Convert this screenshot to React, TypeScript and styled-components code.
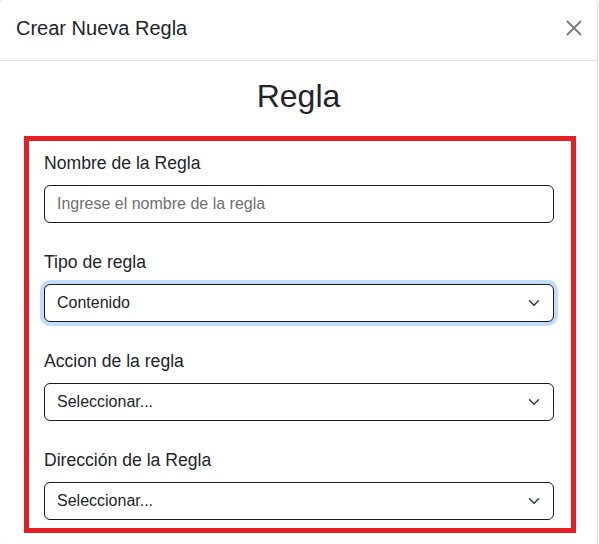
import React from 'react';
import styled, { createGlobalStyle } from 'styled-components';

const GlobalStyle = createGlobalStyle`
  body {
    margin: 0;
    background: #fff;
    font-family: "Liberation Sans", Arial, sans-serif;
    color: #212529;
  }
`;

const Modal = styled.div`
  width: 599px;
  margin: -4px 0 0 -1px;
  box-sizing: border-box;
  background: #fff;
  border: 1px solid #dee2e6;
  border-radius: 8px;
  overflow: hidden;
`;

const Header = styled.div`
  display: flex;
  align-items: center;
  justify-content: space-between;
  padding: 16px 15px 17px 16px;
  border-bottom: 1px solid #dee2e6;
`;

const Title = styled.h5`
  margin: 0;
  font-size: 20px;
  line-height: 30px;
  font-weight: 400;
  color: #212529;
`;

const CloseButton = styled.button`
  display: flex;
  padding: 0;
  border: 0;
  background: transparent;
  cursor: pointer;
  width: 16px;
  height: 16px;
`;

const Body = styled.div`
  padding: 16px 16px 16px;
`;

const Heading = styled.h2`
  margin: 0 0 21px;
  text-align: center;
  font-size: 32px;
  line-height: 38px;
  font-weight: 400;
  color: #212529;
`;

const RuleBox = styled.div`
  margin: 0 5px 0 8px;
  border: 5px solid #e31e24;
  padding: 12px 17px 8px 15px;
`;

const Field = styled.div`
  margin-bottom: 29px;

  &:last-child {
    margin-bottom: 0;
  }
`;

const Label = styled.label`
  display: block;
  font-size: 17.6px;
  line-height: 20px;
  margin-bottom: 12px;
  color: #212529;
`;

const controlStyles = `
  display: block;
  width: 100%;
  height: 38px;
  box-sizing: border-box;
  padding: 6px 12px;
  font-family: "Liberation Sans", Arial, sans-serif;
  font-size: 16px;
  line-height: 24px;
  color: #212529;
  background: #fff;
  border: 1px solid #1c1c1c;
  border-radius: 6px;
  outline: none;
`;

const TextInput = styled.input`
  ${controlStyles}

  &::placeholder {
    color: #6f6f6f;
  }
`;

const SelectWrap = styled.div`
  position: relative;
`;

const Select = styled.select<{ $focused?: boolean }>`
  ${controlStyles}
  appearance: none;
  padding-right: 36px;
  box-shadow: ${({ $focused }) =>
    $focused ? '0 0 0 4px rgba(13, 110, 253, 0.25)' : 'none'};
`;

const Chevron = styled.svg`
  position: absolute;
  right: 14px;
  top: 50%;
  margin-top: -6px;
  pointer-events: none;
`;

function SelectField({
  label,
  value,
  options,
  focused
}: {
  label: string;
  value: string;
  options: string[];
  focused?: boolean;
}) {
  return (
    <Field>
      <Label>{label}</Label>
      <SelectWrap>
        <Select defaultValue={value} $focused={focused}>
          {options.map(o => (
            <option key={o}>{o}</option>
          ))}
        </Select>
        <Chevron width="12" height="12" viewBox="0 0 16 16">
          <path
            d="M2 5l6 6 6-6"
            fill="none"
            stroke="#343a40"
            strokeWidth="2"
            strokeLinecap="round"
            strokeLinejoin="round"
          />
        </Chevron>
      </SelectWrap>
    </Field>
  );
}

export default function App() {
  return (
    <>
      <GlobalStyle />
      <Modal>
        <Header>
          <Title>Crear Nueva Regla</Title>
          <CloseButton aria-label="Close">
            <svg width="16" height="16" viewBox="0 0 16 16">
              <path
                d="M1 1L15 15M15 1L1 15"
                stroke="#7a7a7a"
                strokeWidth="1.8"
                fill="none"
              />
            </svg>
          </CloseButton>
        </Header>
        <Body>
          <Heading>Regla</Heading>
          <RuleBox>
            <Field>
              <Label>Nombre de la Regla</Label>
              <TextInput placeholder="Ingrese el nombre de la regla" />
            </Field>
            <SelectField
              label="Tipo de regla"
              value="Contenido"
              options={['Contenido', 'Remitente', 'Asunto']}
              focused
            />
            <SelectField
              label="Accion de la regla"
              value="Seleccionar..."
              options={['Seleccionar...', 'Bloquear', 'Permitir']}
            />
            <SelectField
              label="Dirección de la Regla"
              value="Seleccionar..."
              options={['Seleccionar...', 'Entrante', 'Saliente']}
            />
          </RuleBox>
        </Body>
      </Modal>
    </>
  );
}
